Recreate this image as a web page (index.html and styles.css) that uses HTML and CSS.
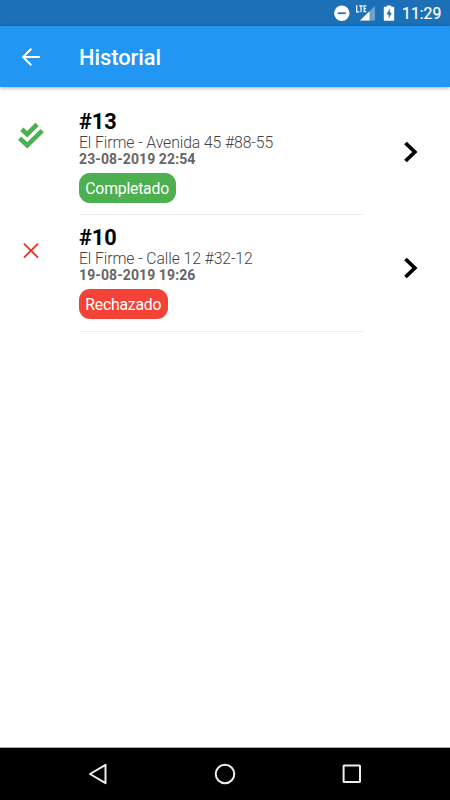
FILE: index.html
```html
<!DOCTYPE html>
<html lang="es">
<head>
<meta charset="utf-8">
<title>Historial</title>
<link rel="stylesheet" href="styles.css">
</head>
<body>
<div class="status">
  <svg width="84" height="26" viewBox="0 0 84 26">
    <circle cx="11.8" cy="13.2" r="7.7" fill="#fff"/>
    <path d="M7.8 13.2h8" stroke="#1b70b8" stroke-width="1.7"/>
    <path d="M45 6v14.5H30z" fill="#fff" opacity=".35"/>
    <path d="M39.5 11.3v9.2H30z" fill="#fff"/>
    <path d="M26.7 5.2v6.6h2.6M29.3 5.8h3.4M31 5.8v6.5M36.4 5.8h-2.3v5.9h2.3M34.1 8.6h2" fill="none" stroke="#fff" stroke-width="1.2"/>
    <path d="M56.7 5.4h4.5v1.4h2c.6 0 1 .4 1 1v12c0 .6-.4 1-1 1h-8.4c-.6 0-1-.4-1-1v-12c0-.6.4-1 1-1h1.9z" fill="#fff"/>
    <path d="M59.8 8.5l-3.3 6h2.2v4.2l3.1-5.9h-2z" fill="#1b70b8"/>
  </svg>
  <span class="clock">11:29</span>
</div>
<header class="appbar">
  <svg class="back" width="20" height="20" viewBox="0 0 20 20"><path d="M19.8 10H3.3M11.3 1.8L3.1 10l8.2 8.2" fill="none" stroke="#fff" stroke-width="2"/></svg>
  <h1>Historial</h1>
</header>
<main class="list">
  <article class="item">
    <div class="mark">
      <svg width="28" height="28" viewBox="0 0 28 28"><path d="M4.8 7.2l5.4 5L20.1 2.4M2.6 16.2l7.7 7.1L25.2 8.6" fill="none" stroke="#4caf50" stroke-width="4.6"/></svg>
    </div>
    <div class="body">
      <h2>#13</h2>
      <p class="address">El Firme - Avenida 45 #88-55</p>
      <p class="date">23-08-2019 22:54</p>
      <span class="badge done">Completado</span>
    </div>
    <svg class="chevron" width="16" height="24" viewBox="0 0 16 24"><path d="M2.5 3l9.3 9-9.3 9" fill="none" stroke="#000" stroke-width="3.8"/></svg>
  </article>
  <article class="item">
    <div class="mark">
      <svg width="28" height="28" viewBox="0 0 28 28"><path d="M7 5.6l14 14M21 5.6l-14 14" fill="none" stroke="#e93427" stroke-width="1.9"/></svg>
    </div>
    <div class="body">
      <h2>#10</h2>
      <p class="address">El Firme - Calle 12 #32-12</p>
      <p class="date">19-08-2019 19:26</p>
      <span class="badge rejected">Rechazado</span>
    </div>
    <svg class="chevron" width="16" height="24" viewBox="0 0 16 24"><path d="M2.5 3l9.3 9-9.3 9" fill="none" stroke="#000" stroke-width="3.8"/></svg>
  </article>
</main>
<nav class="navbar">
  <svg width="24" height="24" viewBox="0 0 24 24"><path d="M19.5 2.8v18.4L4 12z"/></svg>
  <svg width="24" height="24" viewBox="0 0 24 24"><circle cx="12" cy="12" r="9.3"/></svg>
  <svg width="24" height="24" viewBox="0 0 24 24"><rect x="3.6" y="3.6" width="16.4" height="16.4" rx=".6"/></svg>
</nav>
</body>
</html>
```
FILE: styles.css
```css
* { box-sizing: border-box; margin: 0; padding: 0; }
body {
  width: 450px;
  height: 800px;
  display: flex;
  flex-direction: column;
  overflow: hidden;
  background: #fff;
  font-family: Roboto, "Liberation Sans", sans-serif;
}
svg { display: block; flex: none; }
.status {
  height: 26px;
  display: flex;
  align-items: center;
  padding-left: 330px;
  background: #1b70b8;
  color: #fff;
}
.clock {
  margin-left: -12px;
  font-size: 15.8px;
  font-weight: 400;
  -webkit-text-stroke: .2px #fff;
  line-height: 26px;
  padding-top: 2px;
}
.appbar {
  height: 61px;
  display: flex;
  align-items: center;
  padding-left: 20px;
  background: #2196f3;
  color: #fff;
  box-shadow: 0 1px 4px rgba(0, 0, 0, .35);
}
.appbar h1 {
  margin-left: 39px;
  padding-top: 2px;
  font-size: 21.8px;
  font-weight: 500;
  line-height: 28px;
}
.list { flex: 1; padding-top: 12px; }
.item { height: 116px; display: flex; }
.item + .item { height: 117px; }
.mark { width: 79px; padding: 23px 0 0 16.5px; }
.body {
  width: 284px;
  border-bottom: 1px solid #ececec;
  white-space: nowrap;
}
.body h2 {
  padding-top: 10px;
  font-size: 21.7px;
  font-weight: 700;
  line-height: 25px;
}
.address {
  font-size: 15.75px;
  font-weight: 300;
  letter-spacing: -.09px;
  line-height: 17px;
  color: #444;
}
.date {
  font-size: 14px;
  font-weight: 700;
  letter-spacing: .1px;
  line-height: 16px;
  color: #666;
}
.badge {
  display: inline-block;
  height: 30px;
  margin-top: 6px;
  padding: 1px 7px 0 6.3px;
  border-radius: 11px;
  font-size: 15.75px;
  letter-spacing: -.2px;
  line-height: 30px;
  color: #fff;
}
.done { background: #4caf50; }
.rejected { background: #f44336; }
.chevron { margin: 41px 0 0 40px; }
.navbar {
  height: 53px;
  display: flex;
  justify-content: space-between;
  padding: 14px 86px 0 86px;
  border-top: 1px solid #aaa;
  background: #000;
}
.navbar svg { fill: none; stroke: #eee; stroke-width: 2; stroke-linejoin: round; }
```
